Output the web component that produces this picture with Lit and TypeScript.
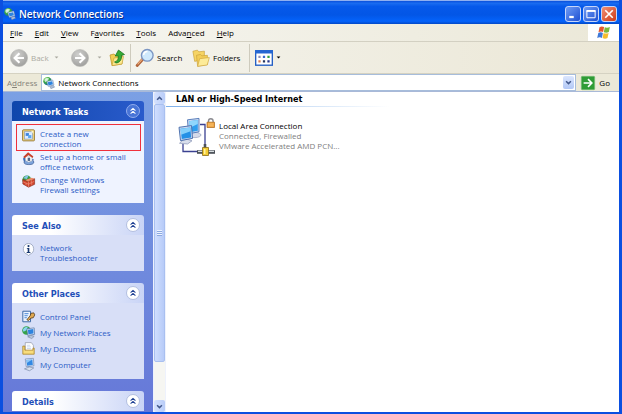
import { LitElement, html, css, svg, nothing } from "lit";
import { customElement, property } from "lit/decorators.js";

const icons: Record<string, unknown> = {
  network: svg`
    <defs><radialGradient id="g" cx=".35" cy=".3" r=".8"><stop offset="0" stop-color="#d8f8c0"/><stop offset=".45" stop-color="#3cab3c"/><stop offset="1" stop-color="#1452b8"/></radialGradient></defs>
    <circle cx="6" cy="5.5" r="5.6" fill="url(#g)"/>
    <path d="M2 4c2-3 4-3 6-2L6 5 3 7z" fill="#e4f6f8" opacity=".7"/>
    <path d="M5 6l8-2 1.6 6.5-7.6 2z" fill="#e6eefa" stroke="#5d7fae" stroke-width=".7"/>
    <path d="M6.2 7l6-1.5 1.1 4.3-5.8 1.5z" fill="#2d83df"/>
    <path d="M9 12.5l5-1.3 1.5 2.3-5 2z" fill="#aebfd8" stroke="#5b6d8d" stroke-width=".5"/>`,
  wizard: svg`
    <rect x=".7" y="1" width="14.6" height="13.6" rx="1" fill="#f2d67b" stroke="#8c6d24"/>
    <rect x="3.2" y="3.4" width="9.6" height="9" fill="#dcecff" stroke="#8297be" stroke-width=".8"/>
    <path d="M4.5 5h4v3.5h-4z" fill="#3f86dc"/><path d="M7.5 7.5h4v3.6h-4z" fill="#5aa6f0"/><path d="M11 2l3 0v4z" fill="#fff6c8"/>`,
  home: svg`
    <path d="M1.5 7A6.5 6.5 0 0 0 14.5 9z" fill="#2f67bd"/>
    <ellipse cx="8.5" cy="12.5" rx="6" ry="3" fill="#7ea4dc" stroke="#34558e" stroke-width=".8"/>
    <path d="M4 5h8.5v6L8 12.5 4 10.5z" fill="#fafafa" stroke="#8796ad" stroke-width=".6"/>
    <path d="M1.5 6L7.5 .4l6.5 5-1.2 1.9L8 3.8 3.2 7.6z" fill="#c8412c"/>
    <path d="M7 7h3v4H7z" fill="#53698c"/>`,
  firewall: svg`
    <circle cx="6" cy="6" r="5.5" fill="#3d9b42"/><path d="M2 4c2-3 4-4 6-3L6 5z" fill="#82c4ee"/>
    <path d="M1 5.5l6 2.5 8.5-3.5v7L8 15l-7-4z" fill="#d1432b" stroke="#7c2014" stroke-width=".7"/>
    <path d="M7.2 8l8.3-3.5L12 3.3 4 6.2z" fill="#ee8a68"/>
    <path d="M1 8.3l7 3 7-3.4M8 8v7M11.5 6.3v3.2M5 10v3M12 9.5v3" fill="none" stroke="#f6b19c" stroke-width=".6"/>`,
  info: svg`
    <path d="M8 .6a6.8 6.8 0 0 1 1.5 13.3L8 15.8l-1.500-1.900A6.800 6.800 0 0 1 8 .6z" fill="#fcfdff" stroke="#8f9bb4" stroke-width=".9"/>
    <circle cx="8" cy="3.8" r="1.3" fill="#17376f"/><path d="M6 6h3v5h1.3v1.2H5.8V11H7V7.2H6z" fill="#17376f"/>`,
  control: svg`
    <path d="M1 1.5h9.5v13H1z" fill="#eaf3ff" stroke="#3967a6" stroke-width="1.2"/>
    <path d="M3 4.5h5M3 7h4M3 9.5h3" stroke="#4c89d8" stroke-width="1.2"/>
    <path d="M6 12l4-5 1-3 3.5-.5 1.2 2.5-1.8 3.5L11 10l-3 3z" fill="#e0a850" stroke="#493318" stroke-width=".9"/>`,
  places: svg`
    <circle cx="5.5" cy="5.5" r="5.3" fill="#36a24a"/><path d="M1 5c1-3 3-4 6-4L6 5 2 7z" fill="#86d6f0"/>
    <path d="M6 3.5l9-1.2.5 8-8.5 1.2z" fill="#e7effb" stroke="#44669c" stroke-width=".8"/><path d="M7.2 4.7l6.7-.9.4 5.5-6.4.9z" fill="#2d83df"/>
    <path d="M7 13.3l4-1.8 4 1.2-3 2.8z" fill="#b6c4da" stroke="#5e7191" stroke-width=".6"/>`,
  documents: svg`
    <path d="M4 .8h7.5L14 4v9H4z" fill="#fff" stroke="#8a8f9d" stroke-width=".8"/>
    <path d="M1 5h2.5v5h10V7.5H15V15H1z" fill="#f8dc7b" stroke="#a57a1c" stroke-width=".9"/><path d="M6 4h4M6 6h5M6 8h5" stroke="#b4c6e4" stroke-width=".8"/>`,
  computer: svg`
    <path d="M4 1.2l10-.8.7 9.2-9.5 1.2z" fill="#e3ebf7" stroke="#6680ab" stroke-width=".8"/><path d="M5.4 2.5l7.4-.6.5 6.6-7 .9z" fill="#3288e3"/><path d="M5.4 2.5l7.4-.6L6 6z" fill="#8cc6f7"/>
    <path d="M3 13.4l6-2.4 5.5 1.2-5.3 3.5z" fill="#d6dfec" stroke="#65799a" stroke-width=".7"/>`,
  back: svg`
    <defs><radialGradient id="b" cx=".4" cy=".3" r=".8"><stop offset="0" stop-color="#d0d0ce"/><stop offset="1" stop-color="#9a9a98"/></radialGradient></defs>
    <circle cx="8" cy="8" r="7.6" fill="url(#b)" stroke="#b4b4b0" stroke-width=".5"/>
    <path d="M8.4 3.7L4.1 8l4.3 4.3M4.4 8h8" fill="none" stroke="#fff" stroke-width="1.9"/>`,
  forward: svg`
    <defs><radialGradient id="f" cx=".4" cy=".3" r=".8"><stop offset="0" stop-color="#d0d0ce"/><stop offset="1" stop-color="#9a9a98"/></radialGradient></defs>
    <circle cx="8" cy="8" r="7.6" fill="url(#f)" stroke="#b4b4b0" stroke-width=".5"/>
    <path d="M7.6 3.7L11.9 8l-4.3 4.3M11.6 8h-8" fill="none" stroke="#fff" stroke-width="1.9"/>`,
  up: svg`
    <path d="M1 5l4-1 1.5 1.5L13 5v9l-10 1.6z" fill="#f2cf55" stroke="#b98f22" stroke-width=".7"/>
    <path d="M3 15.6L5 8l9.5-1.5L13 14z" fill="#fbe88f" stroke="#c39b2e" stroke-width=".6"/>
    <path d="M5.5 12c3-.6 4-3 3.8-6H6.2L9.5 0l6 4.5-3 .9c.5 4.2-2 7.4-5.5 7.6z" fill="#35ab35" stroke="#176c1c" stroke-width=".7"/>`,
  search: svg`
    <path d="M6 9.2L1 14.6" stroke="#b0643a" stroke-width="2.6" stroke-linecap="round"/><path d="M5.6 9L1.4 13.6" stroke="#f1b483" stroke-width=".9"/>
    <circle cx="10" cy="5.6" r="5.2" fill="#cfe9fc" stroke="#7b95c2" stroke-width="1.2"/><path d="M6.8 5.3A3.4 3.4 0 0 1 10.2 2.2" stroke="#fff" stroke-width="1.4" fill="none"/>`,
  folders: svg`
    <path d="M.8 2l4-1 1.2 1.5 5-.6v7L2.4 11z" fill="#f6d464" stroke="#c9a13a" stroke-width=".6"/>
    <path d="M4 5.6l3.5-.8 1.2 1.3 5-.5v8.2L5 15.4z" fill="#f3cd56" stroke="#c9a13a" stroke-width=".6"/>
    <path d="M5 15.4L6.8 8.6l8.6-1-1.8 6.6z" fill="#fdeb98" stroke="#cfa63e" stroke-width=".6"/>`,
  views: svg`
    <rect x=".6" y="1.6" width="14.8" height="12.8" fill="#fff" stroke="#245fc4" stroke-width="1.2"/><path d="M0 1h16v3H0z" fill="#2466d2"/>
    <path d="M3 6h2v2H3z" fill="#8f8fb8"/><path d="M7 6h2v2H7z" fill="#3768cf"/><path d="M11 6h2v2h-2z" fill="#32a142"/>
    <path d="M3 10h2v2H3z" fill="#de8053"/><path d="M7 10h2v2H7z" fill="#26365f"/><path d="M11 10h2v2h-2z" fill="#24358a"/>`,
  go: svg`
    <rect x=".4" y=".4" width="15.2" height="15.2" rx="1" fill="#2f9c36" stroke="#75bb74" stroke-width=".8"/>
    <path d="M8 3.6L12.4 8 8 12.4M12 8H3" fill="none" stroke="#fff" stroke-width="1.8"/>`,
  flag: svg`
    <path d="M4 2.2Q6.2.8 8.6 2L7.6 7Q5.4 5.9 3 7.2z" fill="#e8572c"/><path d="M9.3 2.3Q11.6 3.4 14.4 2L13.3 7Q11 8.2 8.3 7.2z" fill="#7db938"/>
    <path d="M2.8 8Q5 6.8 7.4 7.9L6.4 12.9Q4.2 11.8 1.7 13z" fill="#3f79d8"/><path d="M8.1 8.1Q10.6 9.2 13.1 7.9L12 13Q9.7 14.2 7.1 13.1z" fill="#f6bd2c"/>`,
  min: svg`<path d="M3 10.5h6v3h-6z" fill="#fff"/>`,
  max: svg`<path d="M2.5 3.5h11v9.5h-11z" fill="none" stroke="#fff" stroke-width="1.3"/><path d="M2 2.8h12v2.4H2z" fill="#fff"/>`,
  close: svg`<path d="M3 3l10 10M13 3L3 13" stroke="#fff" stroke-width="2.2"/>`,
  caret: svg`<path d="M2 5h12l-6 6z" fill="currentColor"/>`,
  chevDown: svg`<path d="M2.5 5L8 10.5 13.5 5" fill="none" stroke="currentColor" stroke-width="3.4"/>`,
  chevUp: svg`<path d="M2.5 11L8 5.5 13.5 11" fill="none" stroke="currentColor" stroke-width="3.4"/>`,
  collapse: svg`<path d="M4.8 7.6L8 4.6l3.2 3M4.8 11.6L8 8.6l3.2 3" fill="none" stroke="currentColor" stroke-width="1.4"/>`,
  lan: svg`
    <path d="M5 26v7.5h16M22 6.5h5v20" fill="none" stroke="#3b4191" stroke-width="1.3"/>
    <ellipse cx="17" cy="17" rx="6" ry="2.6" fill="#d5dae9" stroke="#8590b3" stroke-width=".6"/>
    <path d="M9.5 1.8L21 .4v13.4l-10.5 2z" fill="#c9d9f2" stroke="#4d74b4" stroke-width=".9"/><path d="M11 3.2l8.8-1.1v10.6l-8 1.5z" fill="#2f9ded"/><path d="M11 3.2l8.8-1.1v4L11.3 10z" fill="#8fd6fc"/>
    <path d="M5 22l4-.8 5 1.6-4.5 3.2-8-.8z" fill="#d8deec" stroke="#8590b3" stroke-width=".7"/>
    <path d="M1 9.3L13.5 7.6l1 12.8L2.5 22.6z" fill="#c9d9f2" stroke="#3f66a8" stroke-width=".9"/><path d="M2.5 10.8l9.9-1.3.7 9.9-9.3 1.7z" fill="#2490e6"/><path d="M2.5 10.8l9.9-1.3.2 3.8L3 16.8z" fill="#86d0fa"/>
    <path d="M19 34h18" stroke="#4b5058" stroke-width="3.6"/><path d="M20 33.4h16" stroke="#d7dde0" stroke-width="1.3"/>
    <path d="M27 26v4" stroke="#4b5058" stroke-width="2.6"/>
    <path d="M24.5 29.5h6v8h-6z" fill="#f3cd35" stroke="#86691a" stroke-width=".8"/><path d="M26 31h1.5v5H26z" fill="#fff2a0"/>
    <path d="M30.5 4.5V3a2.3 2.3 0 0 1 4.6 0v1.5" fill="none" stroke="#8a8a90" stroke-width="1.4"/>
    <path d="M29 4.2h7.5V9.500H29z" fill="#f0a23a" stroke="#a9651a" stroke-width=".7"/><path d="M30 6h5.5M30 7.8h5.5" stroke="#fbd08c" stroke-width=".7"/>`,
};

@customElement("xp-icon")
class XpIcon extends LitElement {
  @property() name = "";
  @property({ type: Number }) box = 16;
  static styles = css`
    :host { display: block; flex: none; }
    svg { display: block; width: 100%; height: 100%; overflow: visible; }
  `;
  render() {
    return html`<svg viewBox="0 0 ${this.box} ${this.box}" aria-hidden="true">${icons[this.name]}</svg>`;
  }
}

interface Task { icon: string; lines: string[]; marked?: boolean }

@customElement("task-panel")
class TaskPanel extends LitElement {
  @property() heading = "";
  @property({ type: Boolean, reflect: true }) primary = false;
  @property({ attribute: false }) items: Task[] = [];
  static styles = css`
    :host { display: block; flex: none; }
    .head {
      display: flex; align-items: center; justify-content: space-between;
      height: 20px; box-sizing: border-box; padding: 2px 4px 0 10px;
      border-radius: 3px 3px 0 0; color: #1f4fb8;
      background: linear-gradient(90deg, #fff 30%, #c9d4f6);
    }
    :host([primary]) .head { color: #fff; background: linear-gradient(90deg, #0f46ac, #2a5bcb); }
    h2 { margin: 0; font: bold 9px/12px "DejaVu Sans Condensed", "DejaVu Sans", sans-serif; }
    .fold {
      width: 14px; height: 14px; padding: 0; border-radius: 50%; color: #1d3f92;
      background: #fff; border: 1px solid #b3bfe0; margin-bottom: 3px;
    }
    .fold xp-icon { width: 12px; height: 12px; }
    :host([primary]) .fold { color: #fff; background: #4874d6; border-color: #91aced; }
    ul {
      list-style: none; margin: 0; padding: 8px 9px 8px 10px;
      display: flex; flex-direction: column; gap: 3px; background: #d8dff7;
    }
    .single { padding-top: 7px; }
    :host([primary]) ul { background: #eff3ff; }
    li { position: relative; }
    a { display: flex; gap: 5px; font-size: 8px; line-height: 10px; color: #2c5cc6; text-decoration: none; white-space: nowrap; }
    .single a { line-height: 13px; }
    a xp-icon { width: 13px; height: 13px; }
    .marked::before { content: ""; position: absolute; inset: -5px -6px -2px -6px; border: 1px solid #f0303c; pointer-events: none; }
    .line { display: block; }
  `;
  render() {
    const single = this.items.every((i) => i.lines.length === 1);
    return html`
      <div class="head">
        <h2>${this.heading}</h2>
        <button class="fold" aria-label="Collapse ${this.heading}"><xp-icon name="collapse"></xp-icon></button>
      </div>
      ${this.items.length
        ? html`<ul class=${single ? "single" : "double"}>
            ${this.items.map((i) => html`
              <li class=${i.marked ? "marked" : "plain"}>
                <a href="#"><xp-icon name=${i.icon}></xp-icon><span>${i.lines.map((l) => html`<span class="line">${l}</span>`)}</span></a>
              </li>`)}
          </ul>`
        : nothing}
    `;
  }
}

@customElement("app-root")
class AppRoot extends LitElement {
  static styles = css`
    :host {
      display: flex; flex-direction: column; height: 100vh; box-sizing: border-box; overflow: hidden;
      font-family: "Open Sans", "Noto Sans", sans-serif; font-size: 8px; color: #000;
      background: #ece9d8; border: solid #0b4fe0; border-width: 0 3px 2px;
    }
    button { font: inherit; color: inherit; border: 0; background: none; padding: 0; display: flex; align-items: center; justify-content: center; }
    .title {
      flex: none; display: flex; align-items: center; height: 24px; gap: 3px; margin: 0 -3px; padding: 3px 5px 0 4px; box-sizing: border-box;
      color: #fff; border-top: 1px solid #8fb0f0;
      background: linear-gradient(#0a50dc, #1a6cf0 10%, #0659ea 24%, #0356e6 60%, #0463fb 88%, #0348c6);
    }
    .title xp-icon { width: 12px; height: 12px; }
    h1 { margin: 0; flex: 1; font-size: 10px; line-height: 14px; font-weight: 600; text-shadow: 1px 1px #0a2f8c; }
    .controls { display: flex; gap: 2px; }
    .controls button { width: 16px; height: 16px; box-sizing: border-box; border: 1px solid #c6d6fa; border-radius: 3px; background: linear-gradient(135deg, #6f9cf5, #1e50d2); }
    .controls .close { background: linear-gradient(135deg, #f29075, #cf3a16); }
    .menu { flex: none; display: flex; height: 18px; box-sizing: border-box; border-bottom: 1px solid #d3d0c2; background: linear-gradient(90deg, #f7f7f3, #ebe8d8); }
    .menu nav { display: flex; flex: 1; align-items: center; gap: 12px; padding-left: 7px; }
    .menu u { text-underline-offset: 1px; }
    .brand { width: 31px; background: #fff; display: flex; align-items: center; justify-content: center; }
    .brand xp-icon { width: 17px; height: 16px; }
    .tools { flex: none; display: flex; align-items: center; height: 32px; box-sizing: border-box; padding-left: 7px; border-bottom: 1px solid #d5d2c2; background: linear-gradient(90deg, #f6f6f1, #ebe7d6); }
    .tools button { gap: 3px; }
    .tools xp-icon { width: 18px; height: 18px; }
    .tools .caret { width: 5px; height: 5px; }
    .off { color: #aaa9a0; }
    .rule { width: 1px; height: 28px; background: #cecbbd; }
    .address { flex: none; display: flex; align-items: center; height: 17px; padding: 0 9px 0 4px; gap: 4px; background: #ece9d8; }
    .address label { color: #85837a; }
    .combo { flex: 1; display: flex; align-items: center; gap: 3px; height: 17px; background: #fff; box-sizing: border-box; border: 1px solid #a7bddb; padding-left: 1px; }
    .combo xp-icon { width: 12px; height: 12px; }
    .combo input { flex: 1; min-width: 0; border: 0; padding: 0; background: none; font: inherit; color: inherit; outline: 0; }
    .drop { width: 11px; height: 13px; margin-right: 1px; border-radius: 2px; background: linear-gradient(#dbe6fe, #b2c8f6); color: #43598c; }
    .combo .drop xp-icon { width: 7px; height: 7px; }
    .go { gap: 4px; margin-left: 1px; }
    .go xp-icon { width: 14px; height: 14px; }
    .body { flex: 1; min-height: 0; display: flex; border-top: 1px solid #a9b9d8; background: #fff; }
    aside { width: 150px; flex: none; box-sizing: border-box; overflow: hidden; padding: 9px 9px 0; display: flex; flex-direction: column; gap: 12px; background: linear-gradient(#7ba0e4, #6678d8); }
    .scroll { width: 13px; flex: none; display: flex; flex-direction: column; background: #f6f6f2; box-sizing: border-box; border: solid #eef2fd; border-width: 0 1px; }
    .scroll button { height: 12px; flex: none; border-radius: 2px; background: linear-gradient(90deg, #d6e2fe, #b8ccf8); color: #43598c; }
    .scroll button xp-icon { width: 7px; height: 7px; }
    .track { flex: 1; min-height: 0; }
    .thumb { height: 87%; display: flex; flex-direction: column; gap: 1px; align-items: center; justify-content: center; border-radius: 2px; box-sizing: border-box; border: 1px solid #a9c0f0; background: linear-gradient(90deg, #d0defe, #b7cbf8); }
    .grip { width: 5px; height: 1px; background: #eef4ff; box-shadow: 0 1px #8ca8e0; }
    main { flex: 1; min-width: 0; }
    h2 { margin: 0; padding: 1px 10px; font: bold 9px/12px "DejaVu Sans Condensed", "DejaVu Sans", sans-serif; }
    .line { height: 1px; width: 224px; background: linear-gradient(90deg, #7fb0ea, #fff); }
    .conn { display: flex; gap: 2px; padding: 11px 12px; text-align: left; }
    .conn xp-icon { width: 39px; height: 39px; }
    .conn span { display: block; font-size: 8px; line-height: 10px; color: #808080; }
    .conn .name { color: #000; }
    .text { align-self: flex-start; padding-top: 3px; }
    .back { width: 41px; }
    .tools .back, .tools .find, .tools .dirs { justify-content: flex-start; }
    .more { width: 10px; }
    .step { margin: 0 5px 0 10px; }
    .up { margin: 0 5px 0 5px; }
    .tools .up xp-icon { width: 16px; }
    .find { width: 55px; margin-left: 5px; }
    .dirs { width: 57px; margin-left: 1px; }
    .views { margin-left: 5px; }
  `;

  private tasks: Task[] = [
    { icon: "wizard", lines: ["Create a new", "connection"], marked: true },
    { icon: "home", lines: ["Set up a home or small", "office network"] },
    { icon: "firewall", lines: ["Change Windows", "Firewall settings"] },
  ];
  private also: Task[] = [{ icon: "info", lines: ["Network", "Troubleshooter"] }];
  private places: Task[] = [
    { icon: "control", lines: ["Control Panel"] },
    { icon: "places", lines: ["My Network Places"] },
    { icon: "documents", lines: ["My Documents"] },
    { icon: "computer", lines: ["My Computer"] },
  ];
  private menus = [["", "F", "ile"], ["", "E", "dit"], ["", "V", "iew"], ["F", "a", "vorites"], ["", "T", "ools"], ["Adva", "n", "ced"], ["", "H", "elp"]];

  render() {
    return html`
      <header class="title">
        <xp-icon name="network"></xp-icon>
        <h1>Network Connections</h1>
        <div class="controls">
          <button aria-label="Minimize"><xp-icon name="min"></xp-icon></button>
          <button aria-label="Maximize"><xp-icon name="max"></xp-icon></button>
          <button class="close" aria-label="Close"><xp-icon name="close"></xp-icon></button>
        </div>
      </header>
      <div class="menu">
        <nav>${this.menus.map(([a, k, b]) => html`<button><span>${a}<u>${k}</u>${b}</span></button>`)}</nav>
        <div class="brand"><xp-icon name="flag"></xp-icon></div>
      </div>
      <div class="tools">
        <button class="back off"><xp-icon name="back"></xp-icon>Back</button>
        <button class="more off" aria-label="Back history"><xp-icon class="caret" name="caret"></xp-icon></button>
        <button class="step off" aria-label="Forward"><xp-icon name="forward"></xp-icon></button>
        <button class="more off" aria-label="Forward history"><xp-icon class="caret" name="caret"></xp-icon></button>
        <button class="up" aria-label="Up"><xp-icon name="up"></xp-icon></button>
        <div class="rule"></div>
        <button class="find"><xp-icon name="search"></xp-icon>Search</button>
        <button class="dirs"><xp-icon name="folders"></xp-icon>Folders</button>
        <div class="rule"></div>
        <button class="views" aria-label="Views"><xp-icon name="views"></xp-icon><xp-icon class="caret" name="caret"></xp-icon></button>
      </div>
      <div class="address">
        <label for="addr">A<u>d</u>dress</label>
        <div class="combo">
          <xp-icon name="network"></xp-icon>
          <input id="addr" value="Network Connections" />
          <button class="drop" aria-label="Show addresses"><xp-icon name="chevDown"></xp-icon></button>
        </div>
        <button class="go"><xp-icon name="go"></xp-icon>Go</button>
      </div>
      <div class="body">
        <aside>
          <task-panel primary heading="Network Tasks" .items=${this.tasks}></task-panel>
          <task-panel heading="See Also" .items=${this.also}></task-panel>
          <task-panel heading="Other Places" .items=${this.places}></task-panel>
          <task-panel heading="Details"></task-panel>
        </aside>
        <div class="scroll">
          <button aria-label="Scroll up"><xp-icon name="chevUp"></xp-icon></button>
          <div class="track"><div class="thumb"><div class="grip"></div><div class="grip"></div><div class="grip"></div></div></div>
          <button aria-label="Scroll down"><xp-icon name="chevDown"></xp-icon></button>
        </div>
        <main>
          <h2>LAN or High-Speed Internet</h2>
          <div class="line"></div>
          <button class="conn">
            <xp-icon name="lan" .box=${39}></xp-icon>
            <span class="text"><span class="name">Local Area Connection</span><span>Connected, Firewalled</span><span>VMware Accelerated AMD PCN...</span></span>
          </button>
        </main>
      </div>
    `;
  }
}
